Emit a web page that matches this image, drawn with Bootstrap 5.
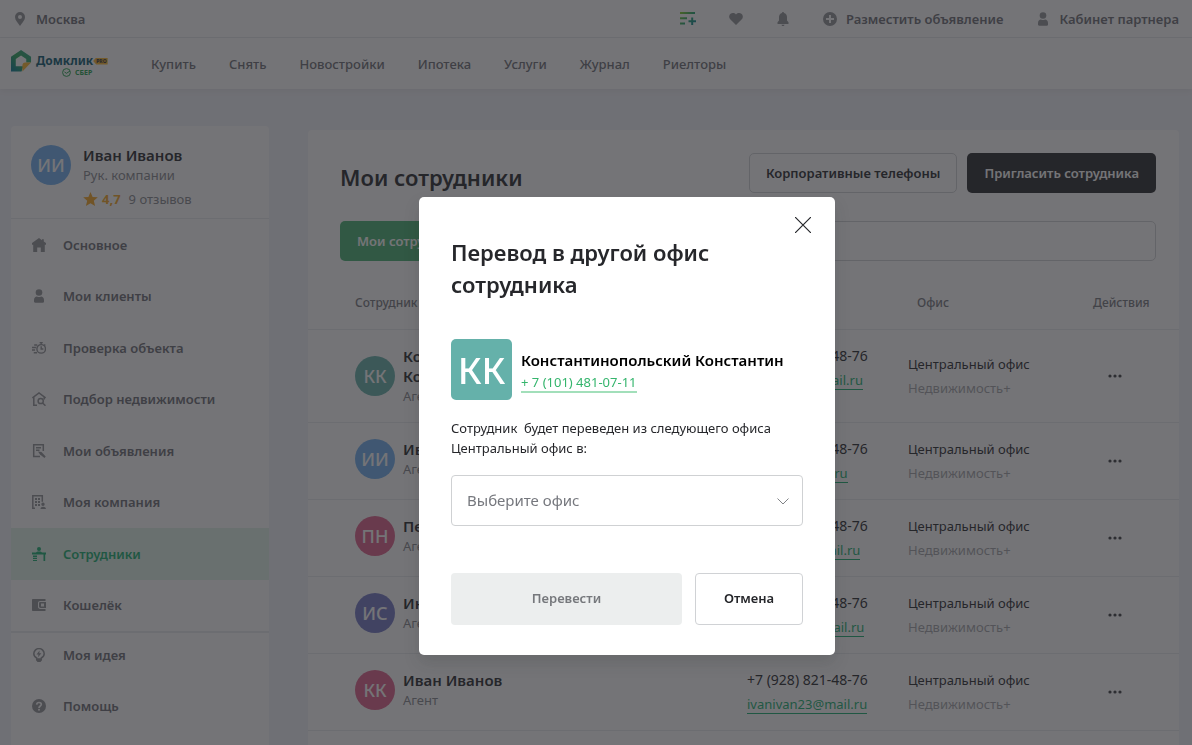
<!DOCTYPE html>
<html lang="ru">
<head>
<meta charset="utf-8">
<meta name="viewport" content="width=device-width, initial-scale=1">
<title>Мои сотрудники</title>
<link href="https://cdn.jsdelivr.net/npm/bootstrap@5.3.0/dist/css/bootstrap.min.css" rel="stylesheet">
<style>
  :root { --ink: #26272b; --gray: #86888d; --green: #17b06f; --line: #e9ebee; }
  body { font-family: "Noto Sans", "Open Sans", sans-serif; font-size: 13px; line-height: 20px; color: var(--ink); background: #f2f3f8; height: 100vh; overflow: hidden; }
  svg { display: block; flex: none; }
  .topbar { height: 38px; padding: 0 13px; border-bottom: 1px solid var(--line); }
  .topbar a, .mainnav a { color: #6c6e74; text-decoration: none; font-weight: 500; }
  .topbar a { font-weight: 600; gap: 9px; }
  .tools { gap: 33px; }
  .ico { color: #919397; width: 14px; height: 14px; }
  .mainnav { height: 51px; padding: 0 11px; box-shadow: 0 2px 6px rgba(0,0,0,.06); }
  .logo { width: 99px; }
  .brand-word { font: 700 12px/14px "Noto Sans", sans-serif; color: #0b5a70; }
  .brand-pro { font: 800 5px/7px "Noto Sans", sans-serif; background: #fbb62c; color: #333; padding: 0 1px 0 3px; clip-path: polygon(3px 0,100% 0,100% 100%,3px 100%,0 50%); }
  .brand-sber { font: 700 7px/9px "Noto Sans", sans-serif; color: #24a24f; padding-left: 26px; }
  .mainnav ul { gap: 33px; margin-left: 41px; }
  .layout { padding: 37px 13px 0 11px; gap: 39px; }
  .side { width: 258px; flex: none; }
  .side, .content { background: #fff; border-radius: 4px; }
  .content { margin-top: 4px; min-width: 0; }
  .profile { height: 93px; padding: 19px 20px 0; gap: 12px; border-bottom: 1px solid var(--line); }
  .ava { width: 40px; height: 40px; border-radius: 50%; color: #fff; font-size: 18px; font-weight: 500; display: flex; align-items: center; justify-content: center; flex: none; }
  .ava-blue { background: #6fb0f0; }
  .ava-teal { background: #65b1aa; }
  .ava-pink { background: #e0608a; }
  .ava-indigo { background: #7379c6; }
  .muted { color: var(--gray); }
  .rate { color: #f5a623; }
  .side-nav { min-height: 412px; }
  .side-nav a, .side-more a { color: #6c6e74; font-weight: 600; text-decoration: none; padding: 0 21px; gap: 17px; }
  .side-more { gap: 7px; border-top: 2px solid var(--line); padding-bottom: 20px; }
  .side-more a { min-height: 44px; }
  .side-nav a.active { background: #e0f3e8; color: var(--green); }
  .side-nav a.active .ico { color: var(--green); }
  h1 { font-size: 22px; line-height: 32px; font-weight: 600; }
  .head { padding: 23px 23px 28px 32px; }
  .head-btns { gap: 10px; }
  .act { height: 40px; padding: 0 16px; font-size: 13px; font-weight: 600; border-radius: 5px; line-height: 20px; white-space: nowrap; }
  .act-line, .act-line:hover { border: 1px solid #d0d2d5; background: #fff; color: var(--ink); }
  .act-dark { background: var(--ink); color: #fff; }
  .act-green { background: #46b271; color: #fff; }
  .find { padding: 0 23px 0 32px; gap: 12px; }
  .find input { height: 40px; border: 1px solid #d0d2d5; border-radius: 5px; }
  .staff { width: 100%; margin-top: 17px; table-layout: fixed; border-collapse: collapse; }
  .staff th { height: 51px; font-size: 12px; font-weight: 500; color: #76787e; }
  .staff tr { border-bottom: 1px solid var(--line); }
  .staff td { height: 77px; padding: 16px 0; vertical-align: top; }
  .staff .mid { vertical-align: middle; }
  .staff .first { padding-left: 47px; }
  .fio { font-weight: 600; font-size: 15px; }
  .phone { font-size: 14px; }
  .mail { color: var(--green); text-decoration: none; border-bottom: 1px solid var(--green); }
  .dots { display: block; border: 0; background: none; padding: 4px; color: #3c3d42; }
  .modal-backdrop.tint { --bs-backdrop-opacity: .64; --bs-backdrop-bg: #25262a; width: 100%; height: 100%; }
  .transfer { padding-left: 62px; }
  .transfer .modal-dialog { max-width: 416px; margin: 197px auto 0; }
  .transfer .modal-content { border: 0; border-radius: 5px; padding: 39px 32px 30px; }
  .transfer .modal-title { color: var(--ink); font-size: 22px; line-height: 32px; font-weight: 600; }
  .cross { position: absolute; top: 12px; right: 16px; padding: 8px; border: 0; background: none; color: var(--ink); }
  .person { margin: 39px 0 18px; gap: 9px; }
  .ava-big { width: 61px; height: 61px; border-radius: 5px; font-size: 37px; }
  .person-name { font-size: 15px; line-height: 20px; font-weight: 600; color: #000; padding-top: 3px; }
  .tel { color: #35b56d; text-decoration: none; border-bottom: 2px solid #a2dfba; line-height: 18px; margin-top: 3px; }
  .office { height: 51px; margin: 17px 0 47px; padding: 0 40px 0 15px; font-size: 15px; color: #76787e; border: 1px solid #cfd1d3; border-radius: 4px; background-image: url("data:image/svg+xml,%3Csvg xmlns='http://www.w3.org/2000/svg' viewBox='0 0 12 12'%3E%3Cpath d='M.5 3.500 6 9l5.500-5.500' fill='none' stroke='%23808286'/%3E%3C/svg%3E"); background-size: 12px 12px; background-position: right 13px center; }
  .form-btns { gap: 13px; }
  .big { height: 52px; font-size: 13px; font-weight: 600; border-radius: 4px; }
  .big:disabled { background: #eceeee; color: #76787c; opacity: 1; border: 0; }
  .cancel { width: 108px; flex: none; }
</style>
</head>
<body>
<svg width="0" height="0" class="position-absolute" aria-hidden="true">
  <defs>
    <linearGradient id="g1" gradientUnits="userSpaceOnUse" x1="0" y1="0" x2="16" y2="14"><stop offset="0" stop-color="#8bd321"/><stop offset=".5" stop-color="#21a56b"/><stop offset="1" stop-color="#007c9a"/></linearGradient>
    <linearGradient id="g2" x1="0" y1="1" x2="1" y2="0"><stop offset="0" stop-color="#00779a"/><stop offset=".5" stop-color="#2aa858"/><stop offset="1" stop-color="#2a9f8a"/></linearGradient>
    <symbol id="pin" viewBox="0 0 14 14"><path fill="currentColor" fill-rule="evenodd" d="M7 0a5 5 0 0 1 5 5c0 3.300-3 6-5 9-2-3-5-5.700-5-9a5 5 0 0 1 5-5Zm0 3a2 2 0 1 0 0 4 2 2 0 0 0 0-4Z"/></symbol>
    <symbol id="heart" viewBox="0 0 14 14"><path fill="currentColor" d="M7 13 1.200 7.300A3.800 3.800 0 0 1 .3 3.700C1 .8 5 .2 7 2.600 9 .2 13 .8 13.700 3.700c.3 1.300 0 2.600-.9 3.600Z"/></symbol>
    <symbol id="bell" viewBox="0 0 14 14"><path fill="currentColor" d="M7 0c.7 0 1 .5 1 1 2 .5 3 2.200 3 4v3.500l1.500 1.700V12h-11v-1.800L3 8.500V5c0-1.800 1-3.500 3-4 0-.5.3-1 1-1ZM5.500 12.700h3C8.400 13.500 7.800 14 7 14s-1.400-.5-1.500-1.300Z"/></symbol>
    <symbol id="plus" viewBox="0 0 14 14"><path fill="currentColor" fill-rule="evenodd" d="M7 0a7 7 0 1 1 0 14A7 7 0 0 1 7 0ZM6 3v3H3v2h3v3h2V8h3V6H8V3Z"/></symbol>
    <symbol id="user" viewBox="0 0 14 14"><circle cx="7" cy="3.500" r="3.300" fill="currentColor"/><path fill="currentColor" d="M2 11c0-2.200 1.300-3.500 3-3.500.6.4 1.200.6 2 .6s1.400-.2 2-.6c1.700 0 3 1.300 3 3.500v1.500c0 .8-.4 1.200-1.200 1.200H3.200C2.400 13.700 2 13.300 2 12.500Z"/></symbol>
    <symbol id="home" viewBox="0 0 14 14"><path fill="currentColor" d="M7 0 0 5v1.700h1.200V14h4V9.500h3.600V14h4V6.700H14V5l-2.200-1.600V1.300H10v.9Z"/></symbol>
    <symbol id="timer" viewBox="0 0 16 14"><g fill="none" stroke="currentColor" stroke-width="1.600"><circle cx="10.500" cy="8" r="4.900"/><path d="M10.500 5v3.200H13M8.700.8h3.600M10.500.8v2M14 3l1.200 1.200M2.500 3.500H6M0 6.500h4.500M0 9.300h3.500M2 12.500h3.700"/></g></symbol>
    <symbol id="search-home" viewBox="0 0 14 14"><g fill="none" stroke="currentColor" stroke-width="1.500"><path d="M.4 6 7 1l6.600 5M1.800 5v8.200H5M12.200 5v2.500"/><circle cx="8.700" cy="9" r="2.600"/><path d="m10.600 11 2.900 2.700"/></g></symbol>
    <symbol id="ad" viewBox="0 0 14 14"><g fill="none" stroke="currentColor" stroke-width="1.500"><path d="M11.300 7V.8H1.700v11.700H8M4 3.700h5M4 6.300h3.500"/></g><path fill="currentColor" d="M6 7.500 9.500 8l4.200 4.500L12.500 14 8 10.500Z"/></symbol>
    <symbol id="company" viewBox="0 0 14 14"><path fill="none" stroke="currentColor" stroke-width="1.500" d="M.8 14V.8h9.500v6M.8 13.200H3"/><path fill="currentColor" d="M3 3h2v2H3zm3 0h2v2H6zM3 6h2v2H3zm3 0h2v2H6zM3 9h2v2H3zm3 0h2v2H6zm5-1.500a1.700 1.700 0 1 1 0 3.400 1.700 1.700 0 0 1 0-3.400ZM8.500 14c0-3 5.300-3 5.500 0Z"/></symbol>
    <symbol id="desk" viewBox="0 0 14 14"><circle cx="7" cy="2" r="2" fill="currentColor"/><path fill="currentColor" d="M4 5.500c.2-1.500 5.800-1.500 6 0H14v2h-.8V14h-1.700V7.500H0v-2Zm-3 3h4V10H1Zm0 2.200h4v1.400H1Zm0 2.200h4V14H1Z"/></symbol>
    <symbol id="wallet" viewBox="0 0 14 14"><path fill="currentColor" fill-rule="evenodd" d="M1 1h12.500v2H8.200C6.900 3 6 3.900 6 5.200v3.600C6 10.100 6.900 11 8.200 11h5.300v2H1c-.6 0-1-.4-1-1V2c0-.6.400-1 1-1Zm7.500 3H14v6H8.500C7.600 10 7 9.500 7 8.600V5.400C7 4.500 7.600 4 8.500 4Zm.5 1.500v3h3v-3Z"/></symbol>
    <symbol id="idea" viewBox="0 0 14 14"><path fill="none" stroke="currentColor" stroke-width="1.500" d="M4.700 10C2.500 8.800 1.800 7.300 1.800 5.800a5.200 5.200 0 0 1 10.400 0c0 1.500-.7 3-2.900 4.200v1H4.700Z"/><path fill="currentColor" d="M4 11h6v1.200L8.500 14h-3L4 12.200ZM7.600 2.500 4.500 6.400h2L6 9.200l3.400-3.900H7.300Z"/></symbol>
    <symbol id="help" viewBox="0 0 14 14"><circle cx="7" cy="7" r="7" fill="currentColor"/><path fill="none" stroke="#fff" stroke-width="1.700" d="M4.700 5.600C4.800 2.700 9.400 2.900 9.300 5.500 9.200 7 7 7 7 9"/><circle cx="7" cy="10.800" r="1" fill="#fff"/></symbol>
    <symbol id="more" viewBox="0 0 14 4"><g fill="currentColor"><circle cx="2" cy="2" r="1.600"/><circle cx="7" cy="2" r="1.600"/><circle cx="12" cy="2" r="1.600"/></g></symbol>
  </defs>
</svg>

<header class="bg-white position-relative">
  <div class="topbar d-flex align-items-center justify-content-between">
    <a href="#" class="d-flex align-items-center"><svg class="ico"><use href="#pin"/></svg>Москва</a>
    <div class="tools d-flex align-items-center">
      <a href="#" aria-label="Сравнение"><svg width="16" height="14" viewBox="0 0 16 14" fill="none" stroke="url(#g1)" stroke-width="2"><path d="M0 1h15M0 6.300h7M0 11.400h5M8.500 9.300H16M12.200 5.500V13"/></svg></a>
      <a href="#" aria-label="Избранное"><svg class="ico"><use href="#heart"/></svg></a>
      <a href="#" aria-label="Уведомления"><svg class="ico"><use href="#bell"/></svg></a>
      <a href="#" class="d-flex align-items-center"><svg class="ico"><use href="#plus"/></svg>Разместить объявление</a>
      <a href="#" class="d-flex align-items-center"><svg class="ico"><use href="#user"/></svg>Кабинет партнера</a>
    </div>
  </div>
  <nav class="mainnav d-flex align-items-center">
    <a href="#" class="logo d-flex" aria-label="Домклик">
      <svg width="21" height="23" viewBox="0 0 22 24"><path fill="url(#g2)" fill-rule="evenodd" d="M0 7 10.500 0 21 7v6h-5V9.500l-5.500-3.700L5 9.500V17h8l-2 5.500H0Z"/><path fill="#fbb62c" d="M12 22.500V16c0-1.700 1-3 3-3h6Z"/></svg>
      <span class="ms-1 d-flex flex-column"><span class="d-flex align-items-center pt-1"><span class="brand-word">Домклик</span><span class="brand-pro">PRO</span></span>
      <span class="brand-sber d-flex align-items-center"><svg class="me-1" width="9" height="9" viewBox="0 0 9 9" fill="none" stroke="#24a24f"><circle cx="4.500" cy="4.500" r="3.900"/><path d="m2.500 4 2 1.300L8 3"/></svg>СБЕР</span></span>
    </a>
    <ul class="list-unstyled d-flex mb-0">
      <li><a href="#">Купить</a></li><li><a href="#">Снять</a></li><li><a href="#">Новостройки</a></li><li><a href="#">Ипотека</a></li><li><a href="#">Услуги</a></li><li><a href="#">Журнал</a></li><li><a href="#">Риелторы</a></li>
    </ul>
  </nav>
</header>

<div class="layout d-flex align-items-start">
  <aside class="side">
    <div class="profile d-flex">
      <span class="ava ava-blue">ИИ</span>
      <div>
        <div class="fio">Иван Иванов</div>
        <div class="muted">Рук. компании</div>
        <div class="d-flex align-items-center muted pt-1"><svg width="15" height="14" viewBox="0 0 15 14"><path fill="#f5a623" d="m7.500 0 2.100 4.900 5.200.4-4 3.500L12.100 14 7.500 11.200 2.900 14l1.300-5.200-4-3.500 5.200-.4Z"/></svg><b class="rate ms-1 me-2">4,7</b>9 отзывов</div>
      </div>
    </div>
    <nav class="side-nav d-flex flex-column">
      <a href="#" class="d-flex flex-fill align-items-center"><svg class="ico"><use href="#home"/></svg>Основное</a>
      <a href="#" class="d-flex flex-fill align-items-center"><svg class="ico"><use href="#user"/></svg>Мои клиенты</a>
      <a href="#" class="d-flex flex-fill align-items-center"><svg class="ico"><use href="#timer"/></svg>Проверка объекта</a>
      <a href="#" class="d-flex flex-fill align-items-center"><svg class="ico"><use href="#search-home"/></svg>Подбор недвижимости</a>
      <a href="#" class="d-flex flex-fill align-items-center"><svg class="ico"><use href="#ad"/></svg>Мои объявления</a>
      <a href="#" class="d-flex flex-fill align-items-center"><svg class="ico"><use href="#company"/></svg>Моя компания</a>
      <a href="#" class="active d-flex flex-fill align-items-center"><svg class="ico"><use href="#desk"/></svg>Сотрудники</a>
      <a href="#" class="d-flex flex-fill align-items-center"><svg class="ico"><use href="#wallet"/></svg>Кошелёк</a>
    </nav>
    <nav class="side-more d-flex flex-column">
      <a href="#" class="d-flex align-items-center"><svg class="ico"><use href="#idea"/></svg>Моя идея</a>
      <a href="#" class="d-flex align-items-center"><svg class="ico"><use href="#help"/></svg>Помощь</a>
    </nav>
  </aside>

  <main class="content flex-fill">
    <div class="head d-flex align-items-center justify-content-between">
      <h1 class="mb-0 pt-2">Мои сотрудники</h1>
      <div class="head-btns d-flex"><button type="button" class="btn act act-line">Корпоративные телефоны</button><button type="button" class="btn act act-dark">Пригласить сотрудника</button></div>
    </div>
    <div class="find d-flex">
      <button type="button" class="btn act act-green">Мои сотрудники</button>
      <input type="search" class="form-control" aria-label="Поиск сотрудника">
    </div>
    <table class="staff">
      <colgroup><col><col style="width:161px"><col style="width:180px"><col style="width:91px"></colgroup>
      <thead><tr><th class="first">Сотрудник</th><th>Контакты</th><th><span class="ps-2">Офис</span></th><th><span class="ps-1">Действия</span></th></tr></thead>
      <tbody>
        <tr><td class="first mid"><div class="d-flex gap-2 align-items-center"><span class="ava ava-teal">КК</span><div><div class="fio">Константинопольский<br>Константин</div><div class="muted">Агент</div></div></div></td><td><div class="phone mb-1">+7 (928) 821-48-76</div><a href="#" class="mail">konstant2@mail.ru</a></td><td class="mid"><div class="mb-1">Центральный офис</div><div class="muted opacity-75">Недвижимость+</div></td><td class="mid"><button type="button" class="dots ms-3" aria-label="Действия"><svg width="14" height="4"><use href="#more"/></svg></button></td></tr>
        <tr><td class="first"><div class="d-flex gap-2"><span class="ava ava-blue">ИИ</span><div><div class="fio">Иван Иванов</div><div class="muted">Агент</div></div></div></td><td><div class="phone mb-1">+7 (928) 821-48-76</div><a href="#" class="mail">ivanov23@list.ru</a></td><td class="mid"><div class="mb-1">Центральный офис</div><div class="muted opacity-75">Недвижимость+</div></td><td class="mid"><button type="button" class="dots ms-3" aria-label="Действия"><svg width="14" height="4"><use href="#more"/></svg></button></td></tr>
        <tr><td class="first"><div class="d-flex gap-2"><span class="ava ava-pink">ПН</span><div><div class="fio">Петр Николаев</div><div class="muted">Агент</div></div></div></td><td><div class="phone mb-1">+7 (928) 821-48-76</div><a href="#" class="mail">petrnik23@mail.ru</a></td><td class="mid"><div class="mb-1">Центральный офис</div><div class="muted opacity-75">Недвижимость+</div></td><td class="mid"><button type="button" class="dots ms-3" aria-label="Действия"><svg width="14" height="4"><use href="#more"/></svg></button></td></tr>
        <tr><td class="first"><div class="d-flex gap-2"><span class="ava ava-indigo">ИС</span><div><div class="fio">Инна Соколова</div><div class="muted">Агент</div></div></div></td><td><div class="phone mb-1">+7 (928) 821-48-76</div><a href="#" class="mail">innasok23@mail.ru</a></td><td class="mid"><div class="mb-1">Центральный офис</div><div class="muted opacity-75">Недвижимость+</div></td><td class="mid"><button type="button" class="dots ms-3" aria-label="Действия"><svg width="14" height="4"><use href="#more"/></svg></button></td></tr>
        <tr><td class="first"><div class="d-flex gap-2"><span class="ava ava-pink">КК</span><div><div class="fio">Иван Иванов</div><div class="muted">Агент</div></div></div></td><td><div class="phone mb-1">+7 (928) 821-48-76</div><a href="#" class="mail">ivanivan23@mail.ru</a></td><td class="mid"><div class="mb-1">Центральный офис</div><div class="muted opacity-75">Недвижимость+</div></td><td class="mid"><button type="button" class="dots ms-3" aria-label="Действия"><svg width="14" height="4"><use href="#more"/></svg></button></td></tr>
        <tr><td colspan="4"></td></tr>
      </tbody>
    </table>
  </main>
</div>

<div class="modal-backdrop tint show"></div>
<div class="modal transfer d-block overflow-hidden" role="dialog" aria-modal="true" aria-labelledby="transferTitle">
  <div class="modal-dialog">
    <form class="modal-content shadow">
      <button type="button" class="cross" aria-label="Закрыть"><svg width="16" height="16" viewBox="0 0 16 16" fill="none" stroke="currentColor" stroke-width="1.200"><path d="m0 0 16 16M16 0 0 16"/></svg></button>
      <h2 class="modal-title" id="transferTitle">Перевод в другой офис<br>сотрудника</h2>
      <div class="person d-flex align-items-center">
        <span class="ava ava-big ava-teal">КК</span>
        <div><div class="person-name">Константинопольский Константин</div><a href="#" class="tel d-inline-block">+ 7 (101) 481-07-11</a></div>
      </div>
      <label for="office">Сотрудник&nbsp; будет переведен из следующего офиса<br>Центральный офис в:</label>
      <select id="office" class="form-select office"><option>Выберите офис</option></select>
      <div class="form-btns d-flex"><button type="submit" class="btn big flex-fill" disabled>Перевести</button><button type="button" class="btn big act-line cancel">Отмена</button></div>
    </form>
  </div>
</div>
<script src="https://cdn.jsdelivr.net/npm/bootstrap@5.3.0/dist/js/bootstrap.bundle.min.js"></script>
</body>
</html>
